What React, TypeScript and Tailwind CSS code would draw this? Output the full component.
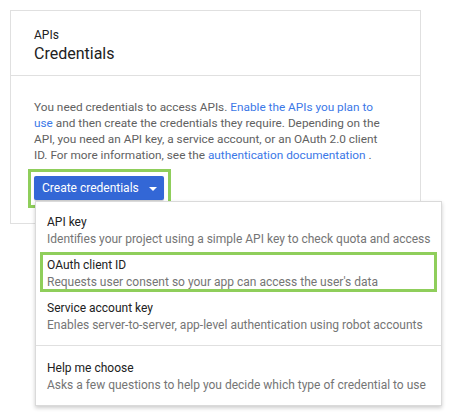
export default function App() {
  return (
    <div className="relative w-[452px] h-[416px] bg-white font-['Roboto',sans-serif] pt-[10px] pl-[10px]">
      <div className="w-[411px] h-[214px] border border-[#e0e0e0]">
        <div className="h-[65px] border-b border-[#e0e0e0] pl-[23px] pt-[17px]">
          <div className="text-[12px] leading-[14px] text-[#212121]">APIs</div>
          <div className="text-[16px] leading-[24px] text-[#212121]">Credentials</div>
        </div>
        <div className="pl-[23px] pt-[23px]">
          <div className="text-[11.8px] leading-[16px] text-[#616161] whitespace-nowrap">
            <div>
              You need credentials to access APIs.{" "}
              <span className="text-[#3b78e7]">Enable the APIs you plan to</span>
            </div>
            <div>
              <span className="text-[#3b78e7]">use</span> and then create the credentials they require. Depending on the
            </div>
            <div>API, you need an API key, a service account, or an OAuth 2.0 client</div>
            <div>
              ID. For more information, see the{" "}
              <span className="text-[#3b78e7]">authentication documentation</span> .
            </div>
          </div>
          <div className="mt-[6px] -ml-[6px] w-[143px] h-[39px] border-[3px] border-[#8fce5b] pt-[4px] pl-[3px]">
            <div className="w-[130px] h-[24px] bg-[#3367d6] rounded-[2px] flex items-center pl-[8px] gap-[10px] shadow-[0_1px_1px_rgba(0,0,0,0.2)]">
              <span className="text-white text-[12px] leading-[16px] whitespace-nowrap">Create credentials</span>
              <span className="w-0 h-0 border-l-[4px] border-r-[4px] border-t-[4px] border-l-transparent border-r-transparent border-t-white mt-[1px]" />
            </div>
          </div>
        </div>
      </div>

      <div className="absolute left-[35px] top-[201px] w-[407px] h-[205px] bg-white border border-[#dadada] shadow-[0_2px_4px_rgba(0,0,0,0.2)] pt-[8px]">
        <MenuItem title="API key" desc="Identifies your project using a simple API key to check quota and access" />
        <div className="relative">
          <div className="absolute left-[4px] top-[-1px] w-[397px] h-[40px] border-[3px] border-[#8fce5b]" />
          <MenuItem title="OAuth client ID" desc="Requests user consent so your app can access the user's data" />
        </div>
        <MenuItem title="Service account key" desc="Enables server-to-server, app-level authentication using robot accounts" />
        <div className="h-px bg-[#e0e0e0] mt-[6px] mb-[10px]" />
        <MenuItem title="Help me choose" desc="Asks a few questions to help you decide which type of credential to use" />
      </div>
    </div>
  );
}

function MenuItem({ title, desc }: { title: string; desc: string }) {
  return (
    <div className="h-[43px] pl-[11px] pt-[4px] whitespace-nowrap">
      <div className="text-[12px] leading-[17px] text-[#212121]">{title}</div>
      <div className="text-[12px] leading-[17px] text-[#757575]">{desc}</div>
    </div>
  );
}
